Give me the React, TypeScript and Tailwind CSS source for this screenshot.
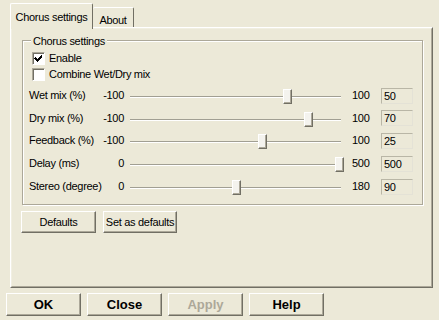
import React from "react";

type Row = { label: string; min: string; max: string; value: string; f: number; h: string };

const rows: Row[] = [
  { label: "Wet mix (%)", min: "-100", max: "100", value: "50", f: 0.75, h: "h-[23px]" },
  { label: "Dry mix (%)", min: "-100", max: "100", value: "70", f: 0.85, h: "h-[22px]" },
  { label: "Feedback (%)", min: "-100", max: "100", value: "25", f: 0.625, h: "h-[23px]" },
  { label: "Delay (ms)", min: "0", max: "500", value: "500", f: 1, h: "h-[23px]" },
  { label: "Stereo (degree)", min: "0", max: "180", value: "90", f: 0.5, h: "h-[23px]" },
];

function CheckBox({ checked }: { checked: boolean }) {
  return (
    <div className="w-[13px] h-[13px] bg-white border border-t-[#ACA899] border-l-[#ACA899] border-r-white border-b-white shadow-[inset_1px_1px_0_#716F64] flex items-center justify-center">
      {checked && (
        <svg width="11" height="11" viewBox="0 0 11 11" shapeRendering="crispEdges">
          <path d="M2 4h1v1h1v1h1v-1h1v-1h1v-1h1v-1h1v3h-1v1h-1v1h-1v1h-1v1h-1v-1h-1v-1h-1v-1h-1z" fill="#000" />
        </svg>
      )}
    </div>
  );
}

function Btn({ children, w, bold, disabled }: { children: React.ReactNode; w: string; bold?: boolean; disabled?: boolean }) {
  return (
    <div
      className={`${w} flex items-center justify-center whitespace-nowrap border border-t-white border-l-white border-r-[#716F64] border-b-[#716F64] shadow-[inset_-1px_-1px_0_#ACA899] ${
        bold ? "h-[23px] font-bold text-[13px] tracking-normal" : "h-[22px] text-[11px]"
      } ${disabled ? "text-[#ACA899]" : "text-black"}`}
    >
      {children}
    </div>
  );
}

export default function App() {
  return (
    <div className="w-[439px] h-[320px] bg-[#ECE9D8] overflow-hidden font-['Liberation_Sans',Arial,sans-serif] text-[11px] tracking-[-0.3px] whitespace-nowrap text-black leading-none">
      <div className="pl-[10px] pt-[3px] w-[433px]">
        <div className="flex items-end h-[24px]">
          <div className="relative z-10 h-[26px] mb-[-2px] w-[83px] bg-[#ECE9D8] border-l border-t border-white border-r border-r-[#716F64] rounded-t-[2px] flex justify-center pt-[8px]">
            Chorus settings
          </div>
          <div className="h-[20px] w-[41px] border-t border-white border-r border-r-[#716F64] rounded-t-[2px] flex justify-center pt-[7px]">
            About
          </div>
        </div>
        <div className="h-[261px] border border-t-white border-l-white border-r-[#716F64] border-b-[#716F64]">
          <div className="h-full border border-t-[#F1EFE2] border-l-[#F1EFE2] border-r-[#ACA899] border-b-[#ACA899] pl-[10px] pr-[8px] pt-[11px]">
            <div className="relative h-[165px] border border-[#ACA899] shadow-[inset_1px_1px_0_#fff,1px_1px_0_#fff] pt-[10px] pl-[6px]">
              <span className="absolute left-[8px] top-[-6px] bg-[#ECE9D8] px-[2px] leading-[12px]">Chorus settings</span>
              <div className="flex h-[16px] items-start pl-[3px]">
                <div className="mt-[1px]"><CheckBox checked /></div>
                <span className="ml-[4px] mt-[2px]">Enable</span>
              </div>
              <div className="flex h-[17px] items-start pl-[3px]">
                <div className="mt-[1px]"><CheckBox checked={false} /></div>
                <span className="ml-[4px] mt-[2px]">Combine Wet/Dry mix</span>
              </div>
              {rows.map((r) => (
                <div key={r.label} className={`flex items-center ${r.h}`}>
                  <span className="w-[70px]">{r.label}</span>
                  <span className="w-[25px] text-right">{r.min}</span>
                  <div className="ml-[6px] w-[211px] h-[2px] mt-[3px] relative border-t border-[#A19F93] bg-white">
                    <div
                      className="absolute top-[-8px] w-[9px] h-[15px] bg-[#F4F3EE] border border-t-white border-l-white border-r-[#716F64] border-b-[#716F64] shadow-[inset_-1px_-1px_0_#ACA899]"
                      style={{ left: Math.round(4 + r.f * 205 - 4.5) }}
                    />
                  </div>
                  <span className="ml-[11px] w-[29px]">{r.max}</span>
                  <div className="w-[32px] h-[16px] border border-t-[#B9B6A6] border-l-[#B9B6A6] border-r-[#E4E2D6] border-b-[#E4E2D6] pl-[2px] pt-[2px]">
                    {r.value}
                  </div>
                </div>
              ))}
            </div>
            <div className="flex gap-[7px] mt-[6px] ml-[-1px]">
              <Btn w="w-[75px]">Defaults</Btn>
              <Btn w="w-[74px]">Set as defaults</Btn>
            </div>
          </div>
        </div>
      </div>
      <div className="flex gap-[6px] pl-[6px] mt-[5px]">
        <Btn w="w-[75px]" bold>OK</Btn>
        <Btn w="w-[75px]" bold>Close</Btn>
        <Btn w="w-[75px]" bold disabled>Apply</Btn>
        <Btn w="w-[75px]" bold>Help</Btn>
      </div>
    </div>
  );
}
